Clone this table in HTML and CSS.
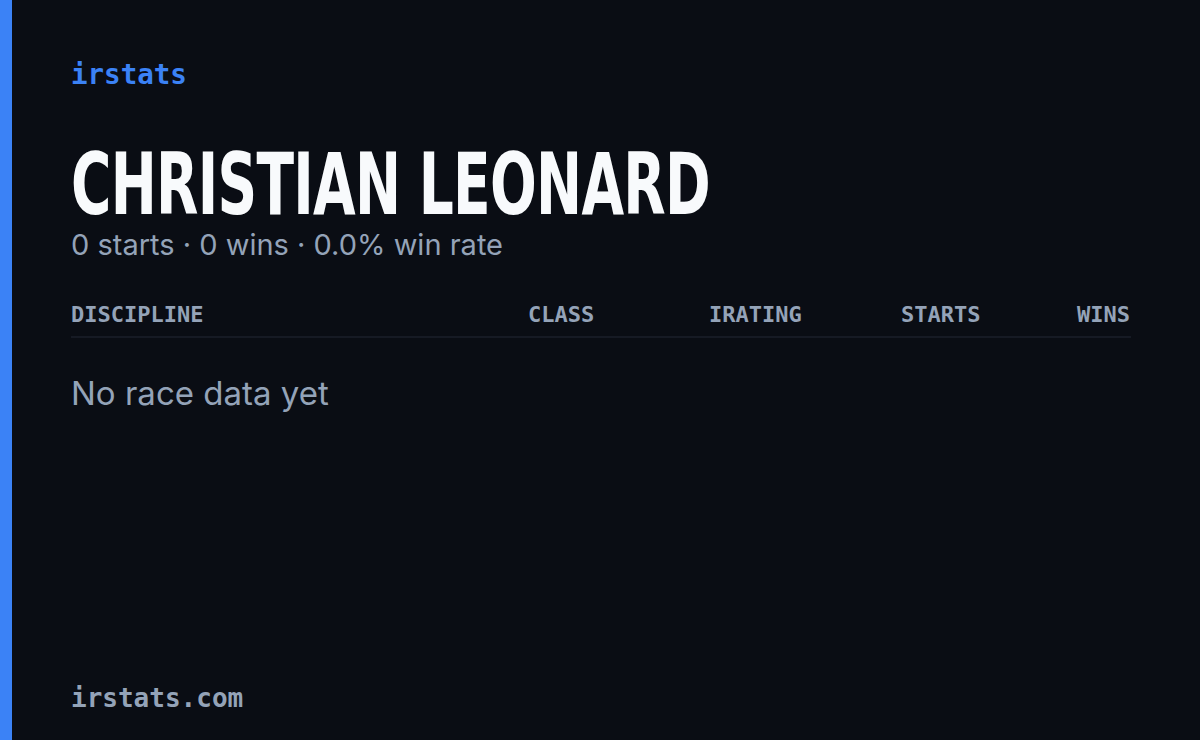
FILE: index.html
```html
<!DOCTYPE html>
<html lang="en">
<head>
  <meta charset="UTF-8">
  <meta name="viewport" content="width=device-width, initial-scale=1.0">
  <title>irstats - Christian Leonard</title>
  <link rel="stylesheet" href="styles.css">
</head>
<body>
  <div class="accent"></div>
  <main class="card">
    <div class="brand">irstats</div>

    <h1 class="name">CHRISTIAN LEONARD</h1>
    <div class="summary">0 starts · 0 wins · 0.0% win rate</div>

    <div class="table-head">
      <span class="col col-discipline">DISCIPLINE</span>
      <span class="col col-class">CLASS</span>
      <span class="col col-irating">IRATING</span>
      <span class="col col-starts">STARTS</span>
      <span class="col col-wins">WINS</span>
    </div>

    <div class="empty">No race data yet</div>

    <div class="footer">irstats.com</div>
  </main>
</body>
</html>
```

FILE: styles.css
```css
html, body {
  height: 100%;
}

body {
  margin: 0;
  padding: 0;
  background-color: #0a0d14;
  color: #f8fafc;
  display: flex;
  font-family: Inter, "Noto Sans", sans-serif;
}

.accent {
  width: 12px;
  flex-shrink: 0;
  background-color: #3b82f6;
}

.card {
  flex: 1;
  display: flex;
  flex-direction: column;
  padding: 54px 69px 24px 59px;
}

.brand {
  font-family: "DejaVu Sans Mono", monospace;
  font-weight: 700;
  font-size: 27.5px;
  line-height: 40px;
  color: #3b82f6;
}

/* condensed face still too wide, squeeze it a bit more */
.name {
  margin: 56px 0 0;
  font-family: "DejaVu Sans Condensed", "DejaVu Sans", sans-serif;
  font-stretch: condensed;
  font-weight: 700;
  font-size: 85px;
  line-height: 70px;
  letter-spacing: -1px;
  white-space: nowrap;
  color: #f8fafc;
  transform: scaleX(0.72);
  transform-origin: left center;
}

.summary {
  margin-top: 7px;
  font-size: 29px;
  line-height: 36px;
  color: #94a3b8;
}

.table-head {
  margin-top: 38px;
  display: flex;
  padding-bottom: 7px;
  border-bottom: 2px solid #161a24;
  font-family: "DejaVu Sans Mono", monospace;
  font-weight: 700;
  font-size: 22px;
  line-height: 28px;
  color: #94a3b8;
}

.col-discipline {
  flex: 1;
}

.col-class {
  width: 181px;
}

.col-irating {
  width: 192px;
}

.col-starts {
  width: 176px;
}

.col-wins {
  width: 54px;
}

.empty {
  margin-top: 33px;
  font-size: 33px;
  line-height: 44px;
  color: #94a3b8;
}

.footer {
  margin-top: auto;
  font-family: "DejaVu Sans Mono", monospace;
  font-weight: 700;
  font-size: 26px;
  line-height: 36px;
  color: #94a3b8;
}
```
